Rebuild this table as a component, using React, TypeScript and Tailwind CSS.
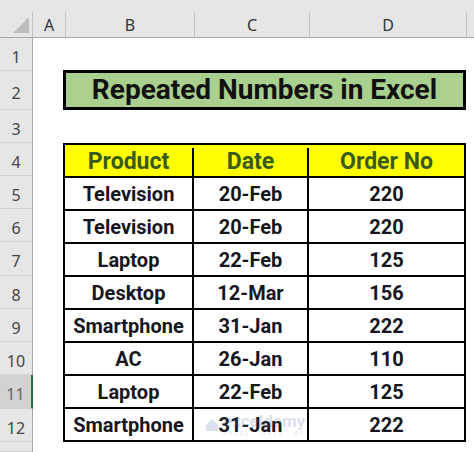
const rowHeights = [33, 39, 33, 33, 33, 33, 34, 33, 33, 33, 34, 33, 10];

const data = [
  ["Television", "20-Feb", "220"],
  ["Television", "20-Feb", "220"],
  ["Laptop", "22-Feb", "125"],
  ["Desktop", "12-Mar", "156"],
  ["Smartphone", "31-Jan", "222"],
  ["AC", "26-Jan", "110"],
  ["Laptop", "22-Feb", "125"],
  ["Smartphone", "31-Jan", "222"],
];

const columns = [
  { label: "A", width: "w-[32px]" },
  { label: "B", width: "w-[128px]" },
  { label: "C", width: "w-[114px]" },
  { label: "D", width: "w-[156px]" },
];

function Sep() {
  return <div className="w-px h-[25px] self-end bg-[#c4c4c4]" />;
}

export default function App() {
  return (
    <div className="w-[474px] h-[452px] overflow-hidden bg-white relative font-['Roboto',sans-serif]">
      {/* column headers */}
      <div className="flex h-[38px] bg-[#e6e6e6] border-b border-[#a8a8a8] text-[#333] font-['Noto_Sans',sans-serif] text-[16px]">
        <div className="w-[32px] relative">
          <div className="absolute right-[3px] bottom-[4px] w-0 h-0 border-l-[16px] border-l-transparent border-b-[16px] border-b-[#bdbdbd]" />
        </div>
        <Sep />
        {columns.map((c) => (
          <div key={c.label} className="flex">
            <div className={`${c.width} flex items-center justify-center pt-[12px]`}>{c.label}</div>
            <Sep />
          </div>
        ))}
        <div className="flex-1" />
      </div>

      <div className="flex">
        {/* row headers */}
        <div className="w-[33px] flex flex-col bg-[#e6e6e6] border-r border-[#a8a8a8] text-[#444] font-['Noto_Sans',sans-serif] text-[16px]">
          {rowHeights.map((h, i) => (
            <div
              key={i}
              className={`flex items-center justify-center pt-[5px] border-b border-[#d2d2d2] ${
                i === 10 ? "bg-[#d2d2d2] text-[#666] border-r-2 border-r-[#217346] -mr-px" : ""
              }`}
              style={{ height: h }}
            >
              {i < 12 ? i + 1 : ""}
            </div>
          ))}
        </div>

        {/* sheet content */}
        <div className="flex-1 flex flex-col">
          <div className="h-[32px]" />
          <div className="ml-[30px] w-[403px] h-[40px] border-[3px] border-black bg-[#a9d08e] flex items-center justify-center text-[28px] font-bold text-[#111] pb-[1px]">
            Repeated Numbers in Excel
          </div>
          <div className="h-[33px]" />
          <div className="ml-[30px] w-[403px] border-2 border-black">
            <div className="flex h-[31px] bg-[#ffff00] text-[#3a5a1c] text-[23px] font-bold pt-[3px]">
              <div className="w-[129px] border-r-2 border-black flex items-center justify-center">Product</div>
              <div className="w-[115px] border-r-2 border-black flex items-center justify-center">Date</div>
              <div className="flex-1 flex items-center justify-center">Order No</div>
            </div>
            {data.map((r, i) => (
              <div key={i} className="flex h-[33px] border-t-2 border-black text-[#16161f] text-[20px] font-bold">
                <div className="w-[129px] border-r-2 border-black flex items-center justify-center">{r[0]}</div>
                <div className="w-[115px] border-r-2 border-black flex items-center justify-center">{r[1]}</div>
                <div className="flex-1 flex items-center justify-center">{r[2]}</div>
              </div>
            ))}
          </div>
        </div>
      </div>

      {/* watermark */}
      <div className="absolute left-[204px] top-[413px] flex items-center gap-[3px] opacity-20 text-[#4a6fa5] pointer-events-none">
        <svg width="16" height="16" viewBox="0 0 16 16">
          <path d="M2 8 L8 2 L14 8 L14 14 L2 14 Z" fill="#4a6fa5" />
        </svg>
        <div className="flex flex-col leading-none">
          <span className="text-[17px] font-bold">exceldemy</span>
          <span className="text-[6px] tracking-[2px]">EXCEL · DATA · BI</span>
        </div>
      </div>
    </div>
  );
}
